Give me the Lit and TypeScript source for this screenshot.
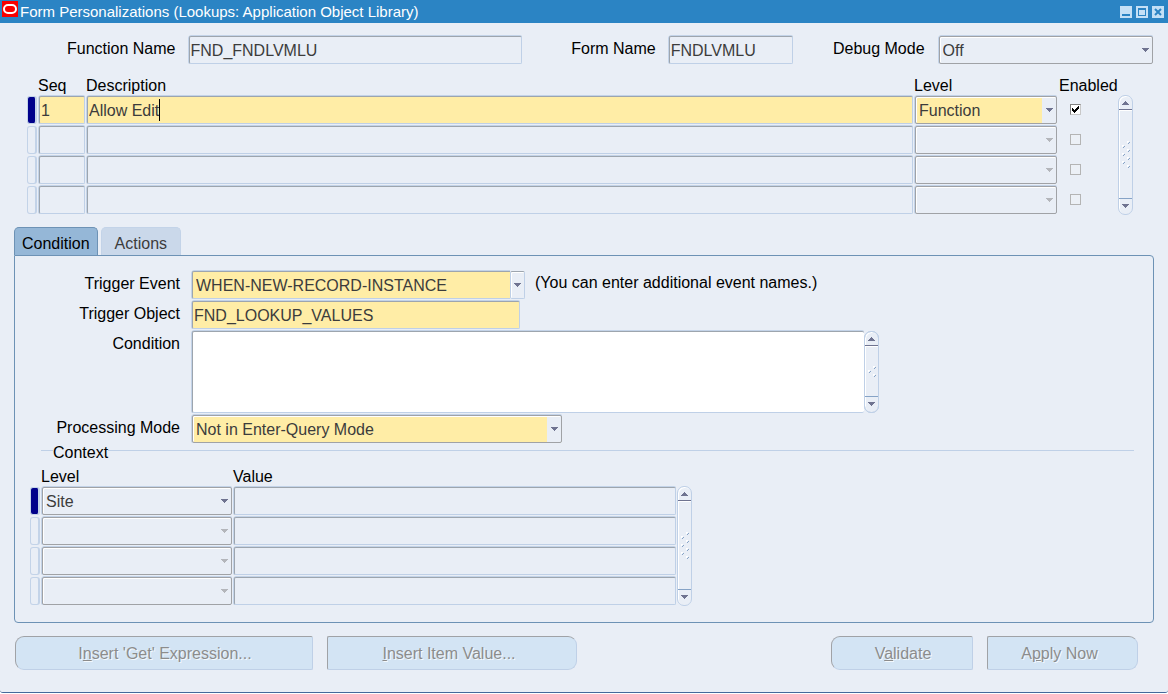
import { LitElement, html, svg, css, nothing } from "lit";
import { customElement, property, state } from "lit/decorators.js";
import { classMap } from "lit/directives/class-map.js";

@customElement("forms-scrollbar")
class FormsScrollbar extends LitElement {
  @property({ type: Number }) dots = 7;

  static styles = css`
    :host {
      display: flex;
      flex-direction: column;
      box-sizing: border-box;
      width: 15px;
      flex: none;
      border: 1px solid #bfd0e7;
      border-radius: 7px;
      background: #e9eef6;
      box-shadow: inset 1px 1px 0 #fff;
    }
    .arrow {
      appearance: none;
      height: 14px;
      flex: none;
      margin: 0;
      padding: 0;
      border: 0;
      background: none;
      display: grid;
      place-items: center;
    }
    .up { border-bottom: 1px solid #6f7390; }
    .down { height: 16px; padding-bottom: 2px; border-top: 1px solid #86a3c6; }
    .track {
      flex: 1;
      display: grid;
      place-items: center;
      border-top: 1px solid #fff;
      border-left: 1px solid #fff;
    }
    svg { display: block; }
  `;

  render() {
    const h = this.dots * 4;
    return html`
      <button class="arrow up" aria-label="Scroll up">
        <svg width="7" height="4" shape-rendering="crispEdges"><path d="M3 0h1v1h1v1h1v1h1v1H0V3h1V2h1V1h1z" fill="#6f7390" /></svg>
      </button>
      <div class="track">
        <svg width="8" height=${h} shape-rendering="crispEdges">
          ${Array.from({ length: this.dots }, (_, i) => {
            const x = i % 2 ? 0 : 5;
            const y = i * 4;
            return svg`<path d="M${x} ${y}h2v1h-1v1h-1z" fill="#fff" /><path d="M${x + 2} ${y + 1}h1v1h-1v1h-1v-1h1z" fill="#86a3c6" />`;
          })}
        </svg>
      </div>
      <button class="arrow down" aria-label="Scroll down">
        <svg width="7" height="4" shape-rendering="crispEdges"><path d="M0 0h7v1H6v1H5v1H4v1H3V3H2V2H1V1H0z" fill="#6f7390" /></svg>
      </button>
    `;
  }
}

interface RuleRow {
  seq: string;
  description: string;
  level: string;
  enabled: boolean;
}

@customElement("app-root")
class AppRoot extends LitElement {
  @state() private rules: RuleRow[] = [
    { seq: "1", description: "Allow Edit", level: "Function", enabled: true },
    { seq: "", description: "", level: "", enabled: false },
    { seq: "", description: "", level: "", enabled: false },
    { seq: "", description: "", level: "", enabled: false },
  ];
  @state() private contexts: string[] = ["Site", "", "", ""];
  @state() private tab = "Condition";

  static styles = css`
    :host {
      display: block;
      font: 16px/18px "Liberation Sans", Arial, sans-serif;
      color: #000;
    }
    * { box-sizing: border-box; }
    .window {
      display: flex;
      flex-direction: column;
      min-height: calc(100vh - 1px);
      background: #e9eef6;
      border-bottom: 1px solid #44699b;
      border-radius: 0 0 3px 3px;
    }
    .titlebar {
      display: flex;
      align-items: center;
      height: 23px;
      padding: 0 4px 0 2px;
      background: #2b84c4;
      color: #fff;
    }
    .logo { align-self: flex-start; margin-top: 1px; }
    .title { flex: 1; margin: 0 0 0 2px; font-size: 15px; font-weight: 400; }
    .winbtns { display: flex; gap: 4px; }
    .winbtn { display: block; padding: 0; border: 0; width: 12px; height: 12px; background: none; }
    .winbtn svg { display: block; }

    input, select, textarea, button { font: inherit; margin: 0; outline: none; }
    .field {
      appearance: none;
      display: block;
      width: 100%;
      height: 28px;
      padding: 1px 1px 0;
      border: 1px solid;
      border-color: #9da5ae #bfd0e7 #bfd0e7 #9da5ae;
      border-radius: 2px;
      background-color: #e9eef6;
      box-shadow: 0 -1px 0 #c3d3e8, -1px 0 0 #c3d3e8;
      color: #3c3c3c;
      opacity: 1;
    }
    .field.filled { background-color: #ffeda6; }
    select.field {
      padding: 1px 18px 0 3px;
      border-color: #a0a2a6;
      box-shadow: 0 -1px 0 #c3d3e8, -1px 0 0 #c3d3e8, inset 1px 1px 0 #fff;
      background-image: url("data:image/svg+xml,%3Csvg xmlns='http://www.w3.org/2000/svg' width='7' height='4' shape-rendering='crispEdges'%3E%3Cpath d='M0 0h7v1H6v1H5v1H4v1H3V3H2V2H1V1H0z' fill='%236f7390'/%3E%3C/svg%3E");
      background-repeat: no-repeat;
      background-position: right 3px center;
    }
    select.blank {
      background-image: url("data:image/svg+xml,%3Csvg xmlns='http://www.w3.org/2000/svg' width='7' height='4' shape-rendering='crispEdges'%3E%3Cpath d='M0 0h7v1H6v1H5v1H4v1H3V3H2V2H1V1H0z' fill='%23b4b6bb'/%3E%3C/svg%3E");
    }
    select.filled {
      background-color: #e9eef6;
      background-image: url("data:image/svg+xml,%3Csvg xmlns='http://www.w3.org/2000/svg' width='7' height='4' shape-rendering='crispEdges'%3E%3Cpath d='M0 0h7v1H6v1H5v1H4v1H3V3H2V2H1V1H0z' fill='%236f7390'/%3E%3C/svg%3E"),
        linear-gradient(to left, #e9eef6 14px, #ffeda6 14px);
      background-position: right 3px center, 0 0;
      background-size: auto, 100% 100%;
      background-origin: padding-box;
    }

    .heading { display: flex; padding: 13px 15px 0 67px; }
    .heading label { margin-top: 4px; white-space: nowrap; }
    .name-field { flex: 333 1 0; margin-left: 13px; }
    .form-field { flex: 124 1 0; margin-left: 13px; }
    .debug-field { flex: 214 1 0; margin-left: 14px; }
    .form-label { margin-left: 49px; }
    .debug-label { margin-left: 40px; }

    .rules { display: flex; align-items: flex-end; margin: 12px 35px 0 27px; }
    table { table-layout: fixed; border-collapse: collapse; width: 100%; }
    th { height: 19px; padding: 0; font-weight: 400; text-align: left; line-height: 18px; vertical-align: bottom; }
    td { height: 30px; padding: 1px; }
    td.mark { padding: 1px 1px 1px 0; }
    .c-mark { width: 11px; }
    .c-seq { width: 48px; }
    .c-level { width: 144px; }
    .c-enabled { width: 60px; }
    .c-context { width: 192px; }
    .grid-bar { height: 120px; }
    .th-enabled { padding-left: 1px; }
    .marker { width: 10px; height: 28px; border: 1px solid #c3d3e8; border-right-width: 2px; border-radius: 3px; }
    .marker.current { background: #00008b; }
    .entry { position: relative; }
    .caret { position: absolute; left: 72px; top: 3px; width: 1px; height: 22px; background: #000; }
    td.tick { padding: 0 0 2px 12px; }
    .check {
      appearance: none;
      display: block;
      width: 11px;
      height: 11px;
      border: 1px solid #b4b4b4;
      background: #ecf0f6;
    }
    .check:checked {
      border-color: #808080 #c8c8c8 #c8c8c8 #808080;
      background: #fff url("data:image/svg+xml,%3Csvg xmlns='http://www.w3.org/2000/svg' width='9' height='9' shape-rendering='crispEdges'%3E%3Cpath d='M1 3h1v1h1v1h1V4h1V3h1V2h1V1h1v3H7v1H6v1H5v1H4v1H3V7H2V6H1z'/%3E%3C/svg%3E") center no-repeat;
    }

    .tabs { display: flex; gap: 3px; margin: 12px 14px 0; }
    .tab {
      height: 28px;
      padding: 4px 13px 0;
      border: 1px solid #c3d3e8;
      border-bottom: 0;
      border-radius: 5px 5px 0 0;
      background: #cad8ea;
      color: #3c3c3c;
    }
    .tab.active { padding: 4px 7px 0; background: #95b7d7; border-color: #6d92b5; color: #000; }
    .panel {
      margin: 0 14px;
      padding: 15px 19px 16px 15px;
      border: 1px solid #6d92b5;
      border-radius: 0 4px 4px 4px;
    }
    .form { display: grid; grid-template-columns: 150px minmax(0, 1fr); column-gap: 12px; row-gap: 2px; }
    .form label { text-align: right; padding-top: 4px; white-space: nowrap; }
    .event-line { display: flex; gap: 10px; }
    .hint { padding-top: 3px; }
    .combo { display: flex; width: 333px; }
    .combo .field { flex: 1; min-width: 0; padding-left: 3px; border-right: 0; border-radius: 2px 0 0 2px; }
    .combo-btn {
      width: 15px;
      padding: 0;
      display: grid;
      place-items: center;
      border: 1px solid #bfd0e7;
      border-top-color: #9da5ae;
      border-radius: 2px;
      background: #e9eef6;
      box-shadow: inset 1px 1px 0 #fff;
    }
    .object { width: 328px; }
    .mode { width: 370px; }
    .memo { display: flex; width: 687px; max-width: 100%; height: 82px; }
    .memo textarea {
      flex: 1;
      height: auto;
      resize: none;
      overflow: hidden;
      background: #fff;
      border-right: 0;
    }
    .memo-bar { outline: 1px solid #bfd0e7; outline-offset: -1px; }
    fieldset { min-width: 0; margin: 0 0 0 11px; padding: 10px 0 0; border: 0; border-top: 1px solid #bfd0e7; }
    legend { height: 14px; margin-left: 12px; padding: 0; line-height: 20px; }
    .contexts { display: flex; align-items: flex-end; width: 662px; max-width: 100%; margin-left: -11px; }

    .actions { display: flex; gap: 14px; margin: 13px 30px 22px 15px; }
    .spacer { flex: 1; }
    .action {
      height: 34px;
      padding: 1px 0 0 2px;
      border: 1px solid;
      border-color: #a0a2a6 #bfd0e7 #bfd0e7 #a0a2a6;
      background: #d3e4f4;
      color: #8c8c8c;
      text-shadow: 1px 1px 0 #f4f9fd;
    }
    .left-round { border-radius: 9px 2px 2px 9px; }
    .right-round { padding: 1px 6px 0 0; border-radius: 2px 9px 9px 2px; }
    .w-get { width: 298px; }
    .w-item { width: 250px; }
    .w-validate { width: 142px; }
    .w-apply { width: 151px; }
  `;

  private toggle(index: number, e: Event) {
    const enabled = (e.target as HTMLInputElement).checked;
    this.rules = this.rules.map((r, i) => (i === index ? { ...r, enabled } : r));
  }

  private renderRule(r: RuleRow, i: number) {
    const blank = !r.seq;
    return html`
      <tr>
        <td class="mark"><div class=${classMap({ marker: true, current: i === 0 })}></div></td>
        <td><input class=${classMap({ field: true, filled: !blank })} aria-label="Seq" .value=${r.seq} /></td>
        <td>
          <div class="entry">
            <input class=${classMap({ field: true, filled: !blank })} aria-label="Description" .value=${r.description} />
            ${i === 0 ? html`<span class="caret"></span>` : nothing}
          </div>
        </td>
        <td>
          <select class=${classMap({ field: true, filled: !blank, blank })} aria-label="Level" ?disabled=${blank}>
            <option>${r.level}</option>
          </select>
        </td>
        <td class="tick">
          <input class="check" type="checkbox" aria-label="Enabled" .checked=${r.enabled} ?disabled=${blank}
            @change=${(e: Event) => this.toggle(i, e)} />
        </td>
      </tr>
    `;
  }

  private renderContext(level: string, i: number) {
    return html`
      <tr>
        <td class="mark"><div class=${classMap({ marker: true, current: i === 0 })}></div></td>
        <td>
          <select class=${classMap({ field: true, blank: !level })} aria-label="Level" ?disabled=${!level}>
            <option>${level}</option>
          </select>
        </td>
        <td><input class="field" aria-label="Value" /></td>
      </tr>
    `;
  }

  render() {
    return html`
      <main class="window">
        <header class="titlebar">
          <svg class="logo" width="16" height="16">
            <rect width="16" height="16" fill="#f80000" />
            <rect x="2" y="4" width="12" height="8" rx="4" fill="none" stroke="#fff" stroke-width="2" />
          </svg>
          <h1 class="title">Form Personalizations (Lookups: Application Object Library)</h1>
          <div class="winbtns">
            <button class="winbtn" aria-label="Minimize">
              <svg width="12" height="12"><rect width="12" height="12" fill="#c4e0f6" /><rect x="2" y="8" width="8" height="2" fill="#2b84c4" /></svg>
            </button>
            <button class="winbtn" aria-label="Maximize">
              <svg width="12" height="12"><rect width="12" height="12" fill="#c4e0f6" /><path d="M2 2h8v8H2zM3 4v5h6V4z" fill="#2b84c4" fill-rule="evenodd" /></svg>
            </button>
            <button class="winbtn" aria-label="Close">
              <svg width="12" height="12"><rect width="12" height="12" fill="#c4e0f6" /><path d="M3 3l6 6M9 3l-6 6" stroke="#2b84c4" stroke-width="2" /></svg>
            </button>
          </div>
        </header>

        <section class="heading">
          <label for="fn">Function Name</label>
          <div class="name-field"><input id="fn" class="field" value="FND_FNDLVMLU" readonly /></div>
          <label class="form-label" for="form">Form Name</label>
          <div class="form-field"><input id="form" class="field" value="FNDLVMLU" readonly /></div>
          <label class="debug-label" for="debug">Debug Mode</label>
          <div class="debug-field"><select id="debug" class="field"><option>Off</option></select></div>
        </section>

        <section class="rules">
          <table>
            <colgroup><col class="c-mark" /><col class="c-seq" /><col /><col class="c-level" /><col class="c-enabled" /></colgroup>
            <thead>
              <tr><th></th><th>Seq</th><th>Description</th><th>Level</th><th class="th-enabled">Enabled</th></tr>
            </thead>
            <tbody>${this.rules.map((r, i) => this.renderRule(r, i))}</tbody>
          </table>
          <forms-scrollbar class="grid-bar"></forms-scrollbar>
        </section>

        <nav class="tabs" role="tablist">
          ${["Condition", "Actions"].map(
            (t) => html`<button role="tab" aria-selected=${this.tab === t}
              class=${classMap({ tab: true, active: this.tab === t })} @click=${() => (this.tab = t)}>${t}</button>`
          )}
        </nav>

        <section class="panel">
          <div class="form">
            <label for="event">Trigger Event</label>
            <div class="event-line">
              <div class="combo">
                <input id="event" class="field filled" value="WHEN-NEW-RECORD-INSTANCE" />
                <button class="combo-btn" aria-label="Show events">
                  <svg width="7" height="4" shape-rendering="crispEdges"><path d="M0 0h7v1H6v1H5v1H4v1H3V3H2V2H1V1H0z" fill="#6f7390" /></svg>
                </button>
              </div>
              <span class="hint">(You can enter additional event names.)</span>
            </div>
            <label for="object">Trigger Object</label>
            <div><input id="object" class="field filled object" value="FND_LOOKUP_VALUES" /></div>
            <label for="cond">Condition</label>
            <div class="memo">
              <textarea id="cond" class="field"></textarea>
              <forms-scrollbar class="memo-bar" .dots=${3}></forms-scrollbar>
            </div>
            <label for="mode">Processing Mode</label>
            <div><select id="mode" class="field filled mode"><option>Not in Enter-Query Mode</option></select></div>
          </div>

          <fieldset>
            <legend>Context</legend>
            <div class="contexts">
              <table>
                <colgroup><col class="c-mark" /><col class="c-context" /><col /></colgroup>
                <thead><tr><th></th><th>Level</th><th>Value</th></tr></thead>
                <tbody>${this.contexts.map((c, i) => this.renderContext(c, i))}</tbody>
              </table>
              <forms-scrollbar class="grid-bar"></forms-scrollbar>
            </div>
          </fieldset>
        </section>

        <footer class="actions">
          <button class="action left-round w-get">I<u>n</u>sert 'Get' Expression...</button>
          <button class="action right-round w-item"><u>I</u>nsert Item Value...</button>
          <span class="spacer"></span>
          <button class="action left-round w-validate">V<u>a</u>lidate</button>
          <button class="action right-round w-apply">A<u>p</u>ply Now</button>
        </footer>
      </main>
    `;
  }
}
